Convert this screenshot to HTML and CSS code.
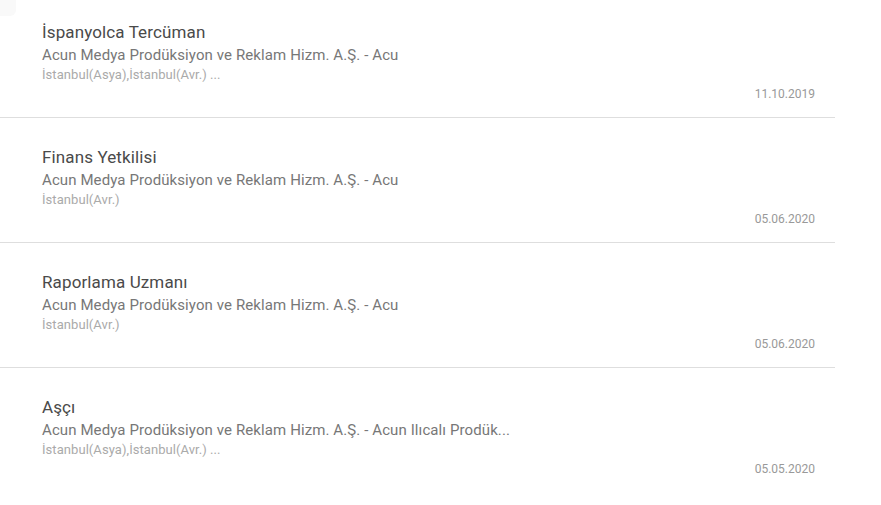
FILE: index.html
```html
<!DOCTYPE html>
<html lang="tr">
<head>
<meta charset="utf-8">
<link rel="stylesheet" href="styles.css">
</head>
<body>
<div class="corner"></div>
<ul class="jobs">
  <li class="job">
    <div class="title">İspanyolca Tercüman</div>
    <div class="company">Acun Medya Prodüksiyon ve Reklam Hizm. A.Ş. - Acu</div>
    <div class="location">İstanbul(Asya),İstanbul(Avr.) ...</div>
    <div class="date">11.10.2019</div>
  </li>
  <li class="job">
    <div class="title">Finans Yetkilisi</div>
    <div class="company">Acun Medya Prodüksiyon ve Reklam Hizm. A.Ş. - Acu</div>
    <div class="location">İstanbul(Avr.)</div>
    <div class="date">05.06.2020</div>
  </li>
  <li class="job">
    <div class="title">Raporlama Uzmanı</div>
    <div class="company">Acun Medya Prodüksiyon ve Reklam Hizm. A.Ş. - Acu</div>
    <div class="location">İstanbul(Avr.)</div>
    <div class="date">05.06.2020</div>
  </li>
  <li class="job">
    <div class="title">Aşçı</div>
    <div class="company">Acun Medya Prodüksiyon ve Reklam Hizm. A.Ş. - Acun Ilıcalı Prodük...</div>
    <div class="location">İstanbul(Asya),İstanbul(Avr.) ...</div>
    <div class="date">05.05.2020</div>
  </li>
</ul>
</body>
</html>
```
FILE: styles.css
```css
html, body {
  margin: 0;
  padding: 0;
  background: #ffffff;
  overflow: hidden;
}
body {
  font-family: Roboto, "Noto Sans", sans-serif;
  font-weight: 400;
  position: relative;
}
.corner {
  position: absolute;
  left: -6px;
  top: -6px;
  width: 22px;
  height: 22px;
  border-radius: 6px;
  background: #f9f9f9;
}
.jobs {
  list-style: none;
  margin: -7px 0 0 0;
  padding: 0;
  width: 835px;
}
.job {
  display: flex;
  flex-direction: column;
  height: 125px;
  box-sizing: border-box;
  padding: 29px 20px 0 42px;
  border-bottom: 1px solid #dedede;
}
.job:last-child {
  border-bottom: none;
}
.title {
  font-size: 17px;
  line-height: 21px;
  letter-spacing: 0.12px;
  color: #4a4a4a;
}
.company {
  margin-top: 2px;
  font-size: 15px;
  line-height: 20px;
  letter-spacing: 0.1px;
  color: #777777;
}
.location {
  margin-top: 1px;
  font-size: 13px;
  line-height: 18px;
  letter-spacing: 0.06px;
  color: #aaaaaa;
}
.date {
  margin-top: 1px;
  font-size: 12px;
  line-height: 18px;
  color: #999999;
  text-align: right;
}
```
